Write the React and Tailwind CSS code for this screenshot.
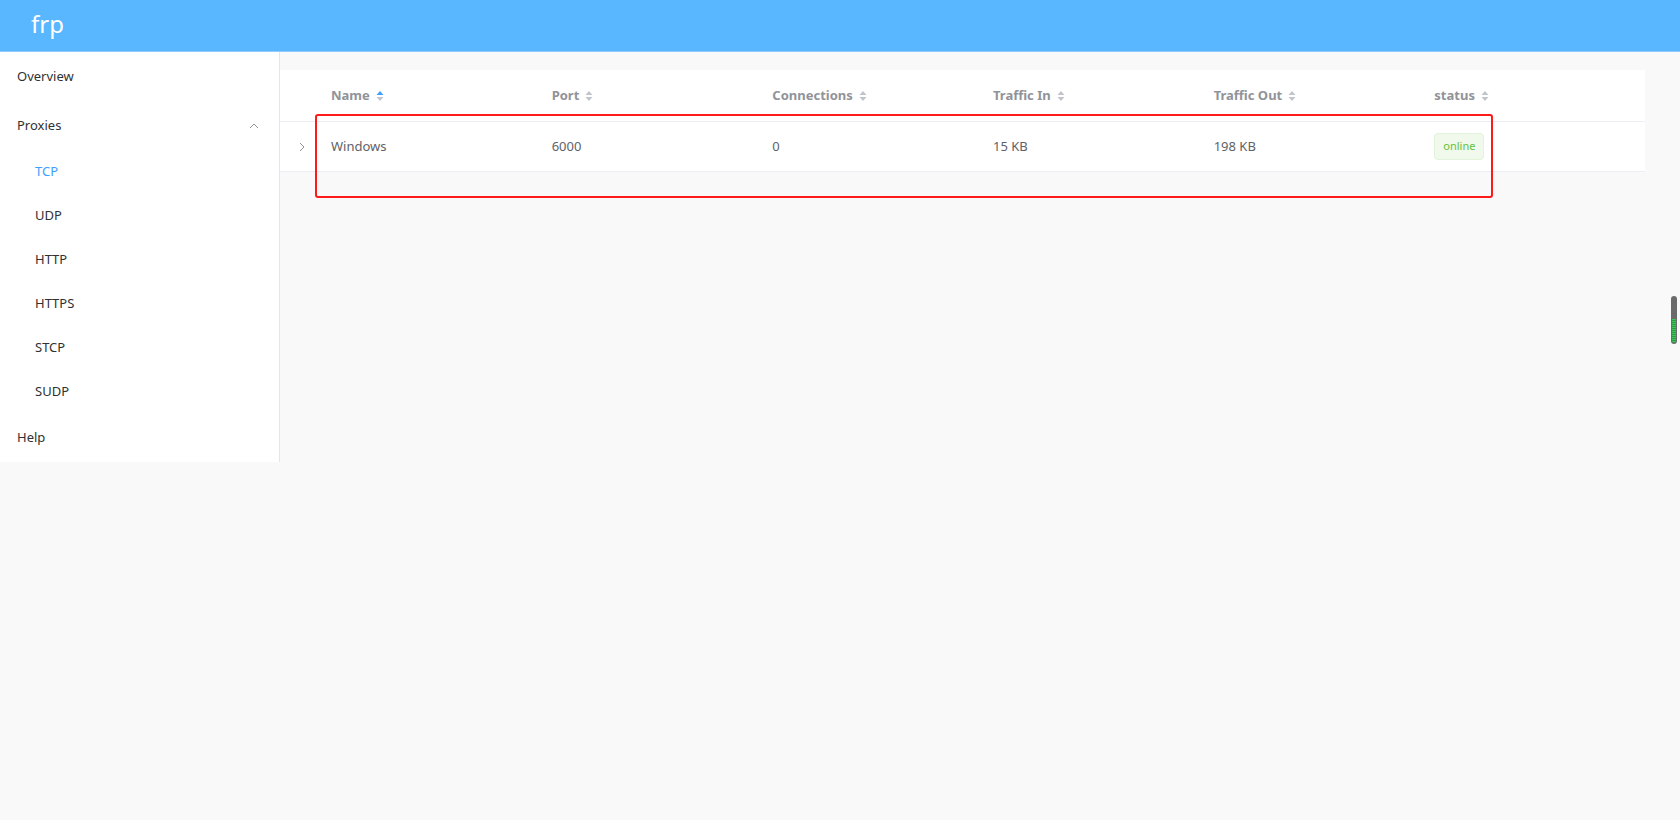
import React from 'react';

const columns = ['Name', 'Port', 'Connections', 'Traffic In', 'Traffic Out', 'status'];

const SortCaret = ({ active }) => (
  <svg width="8" height="12" viewBox="0 0 8 12" className="ml-[6px] shrink-0">
    <path d="M4 1 L7.5 5 L0.5 5 Z" fill={active ? '#409eff' : '#c0c4cc'} />
    <path d="M4 11 L7.5 7 L0.5 7 Z" fill="#c0c4cc" />
  </svg>
);

const App = () => {
  const subItems = ['TCP', 'UDP', 'HTTP', 'HTTPS', 'STCP', 'SUDP'];

  return (
    <div className="min-h-screen w-full bg-[#f9f9f9] flex flex-col font-['Noto_Sans',sans-serif]">
      {/* Header */}
      <header className="h-[52px] shrink-0 bg-[#58b7ff] border-b border-[#8fcbff] flex items-center pl-[31px]">
        <span className="text-white text-[24px] leading-none -mt-[4px]">frp</span>
      </header>

      <div className="flex flex-1 relative">
        {/* Sidebar */}
        <aside className="w-[280px] shrink-0 self-start bg-white border-r border-[#e6e6e6] text-[13px] text-[#303133]">
          <div className="h-[50px] flex items-center pl-[17px]">Overview</div>
          <div className="h-[48px] flex items-center justify-between pl-[17px] pr-[20px]">
            <span>Proxies</span>
            <svg width="10" height="6" viewBox="0 0 10 6">
              <path d="M1 5 L5 1 L9 5" fill="none" stroke="#909399" strokeWidth="1" />
            </svg>
          </div>
          {subItems.map((item) => (
            <div
              key={item}
              className={`h-[44px] flex items-center pl-[35px] ${item === 'TCP' ? 'text-[#409eff]' : ''}`}
            >
              {item}
            </div>
          ))}
          <div className="h-[48px] flex items-center pl-[17px]">Help</div>
        </aside>

        {/* Main */}
        <main className="flex-1 pt-[18px] pr-[35px]">
          <div className="bg-white text-[13px]">
            <div className="grid grid-cols-[41px_repeat(6,1fr)] h-[52px] border-b border-[#ebeef5] items-center font-bold text-[#909399]">
              <div />
              {columns.map((col, i) => (
                <div key={col} className="flex items-center pl-[10px]">
                  {col}
                  <SortCaret active={i === 0} />
                </div>
              ))}
            </div>
            <div className="grid grid-cols-[41px_repeat(6,1fr)] h-[50px] border-b border-[#ebeef5] items-center text-[#606266]">
              <div className="flex justify-center pl-[2px]">
                <svg width="6" height="10" viewBox="0 0 6 10">
                  <path d="M1 1 L5 5 L1 9" fill="none" stroke="#909399" strokeWidth="1" />
                </svg>
              </div>
              <div className="pl-[10px]">Windows</div>
              <div className="pl-[10px]">6000</div>
              <div className="pl-[10px]">0</div>
              <div className="pl-[10px]">15 KB</div>
              <div className="pl-[10px]">198 KB</div>
              <div className="pl-[10px]">
                <span className="inline-flex items-center justify-center w-[50px] h-[27px] rounded-[4px] bg-[#f0f9eb] border border-[#e1f3d8] text-[#67c23a] text-[11px]">
                  online
                </span>
              </div>
            </div>
          </div>
        </main>

        {/* Annotation box */}
        <div className="absolute left-[315px] top-[62px] w-[1178px] h-[84px] border-[2.5px] border-[#ff1a1a] rounded-[3px] pointer-events-none" />

        {/* Floating scroll widget */}
        <div className="absolute right-[3px] top-[244px] w-[6px] h-[48px] rounded-[3px] bg-[#6b6b6b] overflow-hidden flex flex-col justify-end p-[1px]">
          <div className="h-[24px] w-full bg-[repeating-linear-gradient(to_bottom,#3fc35a_0px,#3fc35a_1px,#2a9a44_1px,#2a9a44_2px)] rounded-b-[2px]" />
        </div>
      </div>
    </div>
  );
};

export default App;
